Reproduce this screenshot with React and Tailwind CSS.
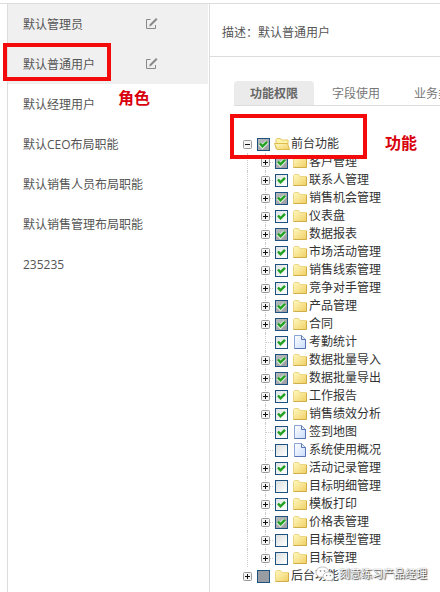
import { useState } from 'react';

const roles = [
  { name: '默认管理员', editable: true },
  { name: '默认普通用户', editable: true, marked: true },
  { name: '默认经理用户' },
  { name: '默认CEO布局职能' },
  { name: '默认销售人员布局职能' },
  { name: '默认销售管理布局职能' },
  { name: '235235' },
];

const tabs = ['功能权限', '字段使用', '业务类型'];

// state: 'on' | 'partial' (checked, some children off) | 'off' | 'grey'
const features = [
  { name: '客户管理', state: 'partial' },
  { name: '联系人管理', state: 'on' },
  { name: '销售机会管理', state: 'partial' },
  { name: '仪表盘', state: 'on' },
  { name: '数据报表', state: 'partial' },
  { name: '市场活动管理', state: 'on' },
  { name: '销售线索管理', state: 'on' },
  { name: '竞争对手管理', state: 'on' },
  { name: '产品管理', state: 'partial' },
  { name: '合同', state: 'partial' },
  { name: '考勤统计', state: 'on', leaf: true },
  { name: '数据批量导入', state: 'partial' },
  { name: '数据批量导出', state: 'partial' },
  { name: '工作报告', state: 'on' },
  { name: '销售绩效分析', state: 'on' },
  { name: '签到地图', state: 'on', leaf: true },
  { name: '系统使用概况', state: 'off', leaf: true },
  { name: '活动记录管理', state: 'on' },
  { name: '目标明细管理', state: 'off' },
  { name: '模板打印', state: 'on' },
  { name: '价格表管理', state: 'partial' },
  { name: '目标模型管理', state: 'off' },
  { name: '目标管理', state: 'off' },
];

const boxStyles = {
  on: 'bg-linear-to-br from-[#dfe3e3] to-white',
  off: 'bg-linear-to-br from-[#dcdfdf] to-white',
  partial: 'bg-linear-to-br from-[#b9bcbc] to-[#9a9ca3]',
  grey: 'bg-[#9a9ca3]',
};

const EditIcon = () => (
  <svg width="13" height="12" viewBox="0 0 13 12" fill="none" stroke="#888">
    <path d="M5.500 1.500H1.500v9h9V7" />
    <path d="M5 7.500 11.800.800" strokeWidth="2" />
    <path d="M4 8.500l1.200-1.200" />
  </svg>
);

const FolderIcon = ({ open }) => (
  <svg width="16" height="14" viewBox="0 0 16 14">
    <defs>
      <linearGradient id="folder" x1="0" y1="0" x2="1" y2="1">
        <stop offset="0" stopColor="#fff9c4" />
        <stop offset="1" stopColor="#f0cf62" />
      </linearGradient>
    </defs>
    {open ? (
      <>
        <path d="M2 12V2.500l1-1h3.500l1 1.500H14V7" fill="#fff3a8" stroke="#e3c765" />
        <path d="M.500 6.500H13.500l2 6H3z" fill="url(#folder)" stroke="#dcbb50" />
      </>
    ) : (
      <>
        <path d="M1.500 12.500v-10l1-1h4l1.500 2h6.500v9z" fill="url(#folder)" stroke="#ecd680" />
        <path d="M1.500 12.500h13V4" fill="none" stroke="#cfae4a" />
      </>
    )}
  </svg>
);

const PageIcon = () => (
  <svg width="12" height="14" viewBox="0 0 12 14">
    <defs>
      <linearGradient id="page" x1="0" y1="0" x2="1" y2="1">
        <stop offset="0" stopColor="#fff" />
        <stop offset="1" stopColor="#c9dcfa" />
      </linearGradient>
    </defs>
    <path d="M.5.5h7l4 4v9H.5z" fill="url(#page)" stroke="#8aa4d6" />
    <path d="M7.5.5v4h4v9H.5" fill="none" stroke="#5a74b6" />
  </svg>
);

const Toggle = ({ open, label }) => (
  <button type="button" aria-label={label} aria-expanded={open} className="flex">
    <svg width="9" height="9" viewBox="0 0 9 9" fill="none">
      <rect x=".5" y=".5" width="8" height="8" rx="1" fill="#f4f4f4" stroke="#999" />
      <path d={open ? 'M2 4.5h5' : 'M2 4.5h5M4.5 2v5'} stroke="#111" />
    </svg>
  </button>
);

const TreeRow = ({ id, name, state, leaf, open, child }) => {
  const [checked, setChecked] = useState(state === 'on' || state === 'partial');

  return (
    <li className="flex h-[18px] items-center">
      {child && <span className="ml-2 h-full w-[10px] shrink-0 border-l border-dotted border-[#ccc]" />}
      <span className="grid h-full w-[18px] shrink-0 grid-cols-1 place-items-center pr-0.5">
        {child && (
          <span className="col-start-1 row-start-1 h-full border-l border-dotted border-[#ccc]" />
        )}
        {child && (
          <span className="col-start-1 row-start-1 ml-2 w-2 border-t border-dotted border-[#ccc]" />
        )}
        {!leaf && (
          <span className="col-start-1 row-start-1 flex">
            <Toggle open={!!open} label={name} />
          </span>
        )}
      </span>
      <span className="grid w-4 shrink-0 items-center">
        <input
          type="checkbox"
          id={id}
          checked={checked}
          onChange={() => setChecked(!checked)}
          className={`peer col-start-1 row-start-1 size-[13px] appearance-none border border-[#1c5180] ${boxStyles[state]}`}
        />
        <svg
          viewBox="0 0 13 13"
          className="pointer-events-none invisible col-start-1 row-start-1 size-[13px] peer-checked:visible"
        >
          {state === 'partial' && (
            <path d="M3 5.8 5.5 8.500 10 4" fill="none" stroke="#e4f0e4" strokeWidth="4" />
          )}
          <path d="M3 5.500 5.500 8.300 10 3.800" fill="none" stroke="#21a121" strokeWidth="2.4" />
        </svg>
      </span>
      <span className="flex w-[18px] shrink-0 items-center justify-center">
        {leaf ? <PageIcon /> : <FolderIcon open={open} />}
      </span>
      <label htmlFor={id} className="whitespace-nowrap text-[#333]">
        {name}
      </label>
    </li>
  );
};

const Sidebar = () => (
  <nav className="ml-[7px] w-[203px] shrink-0 border-x border-[#ddd]">
    <ul className="pr-px">
      {roles.map((role) => (
        <li
          key={role.name}
          className={`relative flex h-10 items-center pt-0.5 pl-[15px] ${role.editable ? 'bg-[#f0f0f0]' : ''}`}
        >
          <button type="button" className="w-[122px] text-left whitespace-nowrap">
            {role.name}
          </button>
          {role.editable && (
            <button type="button" aria-label={`编辑${role.name}`} className="pb-0.5">
              <EditIcon />
            </button>
          )}
          {role.marked && (
            <>
              <span className="pointer-events-none absolute -top-px -left-[5px] h-[38px] w-[108px] border-4 border-[#f40a0a]" />
              <span className="pointer-events-none absolute top-[42px] left-[110px] text-base font-bold text-[#d8000c]">
                角色
              </span>
            </>
          )}
        </li>
      ))}
    </ul>
  </nav>
);

const Watermark = () => (
  <div className="pointer-events-none absolute bottom-0.5 left-[76px] flex items-center gap-1 text-[11px] whitespace-nowrap text-white [text-shadow:1px_1px_1px_#444,0_0_1px_#555]">
    <svg width="20" height="16" viewBox="0 0 20 16" fill="#fff" stroke="#999" strokeWidth=".6">
      <path d="M7.500 1C3.900 1 1 3.300 1 6.200c0 1.600.9 3 2.400 4L3 12l2.200-1.100c.7.200 1.500.3 2.300.3 3.600 0 6.500-2.200 6.500-5S11.100 1 7.500 1z" />
      <path d="M13.500 6C10.500 6 8 7.900 8 10.300s2.500 4.300 5.500 4.300c.6 0 1.300-.1 1.800-.3l1.900 1-.5-1.600c1.400-.8 2.300-2 2.300-3.400C19 7.900 16.500 6 13.500 6z" />
      <g fill="#777" stroke="none">
        <circle cx="5.500" cy="5" r=".8" />
        <circle cx="9.500" cy="5" r=".8" />
        <circle cx="11.700" cy="9.500" r=".7" />
        <circle cx="15.300" cy="9.500" r=".7" />
      </g>
    </svg>
    刻意练习产品经理
  </div>
);

const FeatureTree = () => (
  <div className="relative mt-[29px] ml-[5px]">
    <ul>
      <TreeRow id="front" name="前台功能" state="partial" open />
      {features.map((item, i) => (
        <TreeRow key={item.name} id={`feature-${i}`} child {...item} />
      ))}
      <TreeRow id="back" name="后台功能" state="grey" />
    </ul>
    <span className="pointer-events-none absolute -top-[21px] -left-[9px] h-[45px] w-[137px] border-4 border-[#f40a0a]" />
    <span className="pointer-events-none absolute -top-1 left-[146px] text-base font-bold whitespace-nowrap text-[#d8000c]">
      功能
    </span>
    <Watermark />
  </div>
);

export default function App() {
  const [active, setActive] = useState(0);

  return (
    <div className="flex min-h-screen flex-col overflow-hidden bg-white pt-[3px] font-['Open_Sans','Noto_Sans_CJK_SC',sans-serif] text-xs leading-[18px] text-[#555]">
      <div className="flex flex-1 border-t border-[#ddd]">
        <Sidebar />
        <main className="min-w-0 flex-1">
          <header className="flex h-[53px] items-center border-b border-[#ddd] pt-1.5 pl-3 whitespace-nowrap">
            描述：默认普通用户
          </header>
          <div className="overflow-hidden pt-6 pl-6">
            <div role="tablist" className="flex gap-0.5 border-b border-[#ddd]">
              {tabs.map((tab, i) => (
                <button
                  key={tab}
                  type="button"
                  role="tab"
                  aria-selected={active === i}
                  onClick={() => setActive(i)}
                  className={`h-6 shrink-0 rounded-t-sm px-4 pt-0.5 ${
                    active === i ? 'bg-[#ebebeb] font-bold text-[#666]' : 'text-[#777]'
                  }`}
                >
                  {tab}
                </button>
              ))}
            </div>
            <FeatureTree />
          </div>
        </main>
      </div>
    </div>
  );
}
